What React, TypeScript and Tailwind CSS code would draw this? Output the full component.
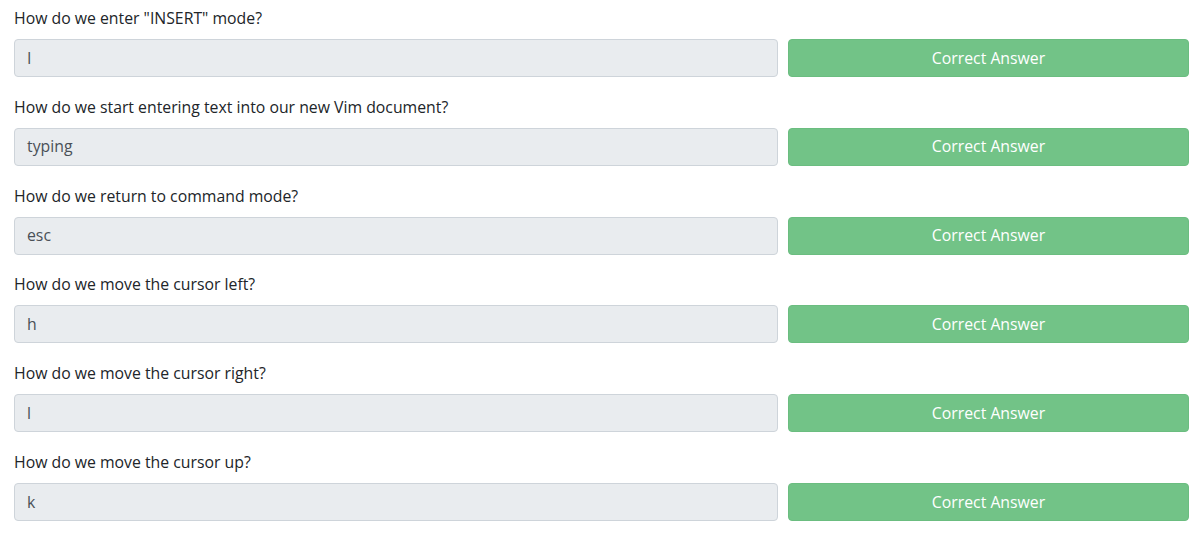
import React from "react";

const items = [
  { q: 'How do we enter "INSERT" mode?', a: "I" },
  { q: "How do we start entering text into our new Vim document?", a: "typing" },
  { q: "How do we return to command mode?", a: "esc" },
  { q: "How do we move the cursor left?", a: "h" },
  { q: "How do we move the cursor right?", a: "l" },
  { q: "How do we move the cursor up?", a: "k" },
];

export default function App() {
  return (
    <div
      className="w-[1200px] h-[533px] bg-white overflow-hidden pl-[14px] pt-[6px]"
      style={{ fontFamily: '"Open Sans", "Noto Sans", sans-serif' }}
    >
      {items.map((it, i) => (
        <div key={i} className="mb-[17.8px]">
          <div className="text-[15.8px] leading-[24px] text-[#212529] mb-[9px]">{it.q}</div>
          <div className="flex gap-[10px]">
            <div className="shrink-0 w-[764px] h-[38px] bg-[#e9ecef] border border-[#ced4da] rounded-[4px] flex items-center px-[12px] pt-[1px] text-[15.8px] text-[#495057]">
              {it.a}
            </div>
            <button className="shrink-0 w-[401px] h-[38px] bg-[#72c387] border border-[#6bbd80] rounded-[4px] flex items-center justify-center pt-[1px] text-[15.8px] text-white">
              Correct Answer
            </button>
          </div>
        </div>
      ))}
    </div>
  );
}
